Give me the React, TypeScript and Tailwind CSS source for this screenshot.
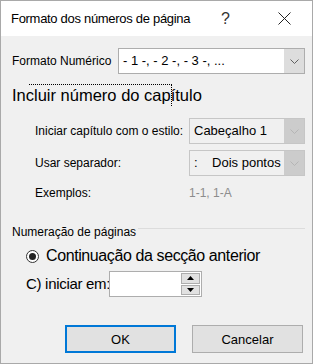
import React from 'react';

function Chevron({ color }: { color: string }) {
  return (
    <svg width="9" height="5" viewBox="0 0 9 5" fill="none">
      <path d="M0.5 0.5 L4.5 4.5 L8.5 0.5" stroke={color} strokeWidth="1" />
    </svg>
  );
}

function Select({ text, disabled, className }: { text: string; disabled?: boolean; className?: string }) {
  return (
    <div
      className={`flex h-[26px] border ${disabled ? 'border-[#c6c6c6] bg-[#f0f0f0]' : 'border-[#adadad] bg-white'} ${className ?? ''}`}
    >
      <div className="flex flex-1 items-center whitespace-pre pl-[4px] text-[13px] text-black">{text}</div>
      <div className={`flex w-[20px] items-center justify-center ${disabled ? 'bg-[#cccccc]' : 'bg-[#dddddd]'}`}>
        <Chevron color={disabled ? '#b5b5b5' : '#606060'} />
      </div>
    </div>
  );
}

export default function App() {
  return (
    <div className="flex h-[364px] w-[313px] flex-col border border-[#a9a9a9] bg-[#f0f0f0] font-['Liberation_Sans',Arial,sans-serif] text-black">
      {/* title bar */}
      <div className="flex h-[35px] items-center bg-white pl-[10px]">
        <span className="text-[13px] tracking-[-0.3px]">Formato dos números de página</span>
        <span className="ml-auto mr-[48px] text-[16px] text-[#333]">?</span>
        <svg className="mr-[21px]" width="13" height="13" viewBox="0 0 13 13">
          <path d="M0.5 0.5 L12.5 12.5 M12.5 0.5 L0.5 12.5" stroke="#222" strokeWidth="1" />
        </svg>
      </div>

      <div className="flex flex-col px-[11px]">
        <div className="mt-[12px] flex items-center">
          <span className="text-[12px]">Formato Numérico</span>
          <Select className="ml-auto w-[187px] -mr-[4px]" text="- 1 -, - 2 -, - 3 -, ..." />
        </div>

        <div className="relative mt-[10px] h-[22px] text-[16.5px] leading-[22px]">
          Incluir número do capítulo
          <div className="absolute left-[17px] top-0 h-[22px] w-[143px] border-r border-t border-dotted border-black" />
        </div>

        <div className="mt-[12px] flex items-center pl-[23px]">
          <span className="text-[12px]">Iniciar capítulo com o estilo:</span>
          <Select className="ml-auto w-[116px] -mr-[4px]" text="Cabeçalho 1" disabled />
        </div>

        <div className="mt-[6px] flex items-center pl-[23px]">
          <span className="text-[12px]">Usar separador:</span>
          <Select className="ml-auto w-[116px] -mr-[4px]" text={':    Dois pontos'} disabled />
        </div>

        <div className="mt-[8px] flex h-[18px] items-center pl-[23px] text-[12px]">
          <span className="w-[154px]">Exemplos:</span>
          <span className="text-[#8c8c8c]">1-1, 1-A</span>
        </div>

        <div className="mt-[22px] flex h-[16px] items-center">
          <span className="text-[12px]">Numeração de páginas</span>
          <div className="-mr-[4px] ml-[2px] h-px flex-1 -translate-y-[4px] bg-[#dcdcdc]" />
        </div>

        <div className="mt-[5px] flex h-[22px] items-center pl-[14px]">
          <div className="flex h-[13px] w-[13px] items-center justify-center rounded-full border border-[#333] bg-white">
            <div className="h-[7px] w-[7px] rounded-full bg-[#222]" />
          </div>
          <span className="ml-[7px] whitespace-nowrap text-[16px] tracking-[-0.4px]">Continuação da secção anterior</span>
        </div>

        <div className="mt-[4px] flex items-center pl-[14px]">
          <span className="w-[83px] whitespace-nowrap text-[15px] tracking-[-0.3px]">C) iniciar em:</span>
          <div className="flex h-[26px] w-[93px] border border-[#adadad] bg-white">
            <div className="flex-1" />
            <div className="my-[1px] mr-[1px] flex w-[19px] flex-col gap-[1px]">
              <div className="flex flex-1 items-center justify-center border border-[#adadad] bg-[#e1e1e1]">
                <svg width="7" height="4" viewBox="0 0 7 4"><path d="M0 4 L3.5 0 L7 4 Z" fill="#000" /></svg>
              </div>
              <div className="flex flex-1 items-center justify-center border border-[#adadad] bg-[#e1e1e1]">
                <svg width="7" height="4" viewBox="0 0 7 4"><path d="M0 0 L3.5 4 L7 0 Z" fill="#000" /></svg>
              </div>
            </div>
          </div>
        </div>

        <div className="mt-[28px] flex justify-end gap-[16px]">
          <button className="flex h-[28px] w-[111px] items-start justify-center border-2 border-[#0078d7] bg-[#e1e1e1] pt-[3px] text-[13px]">
            OK
          </button>
          <button className="-mr-[2px] flex h-[28px] w-[111px] items-end justify-center border border-[#adadad] bg-[#e1e1e1] pb-[3px] text-[13px]">
            Cancelar
          </button>
        </div>
      </div>
    </div>
  );
}
